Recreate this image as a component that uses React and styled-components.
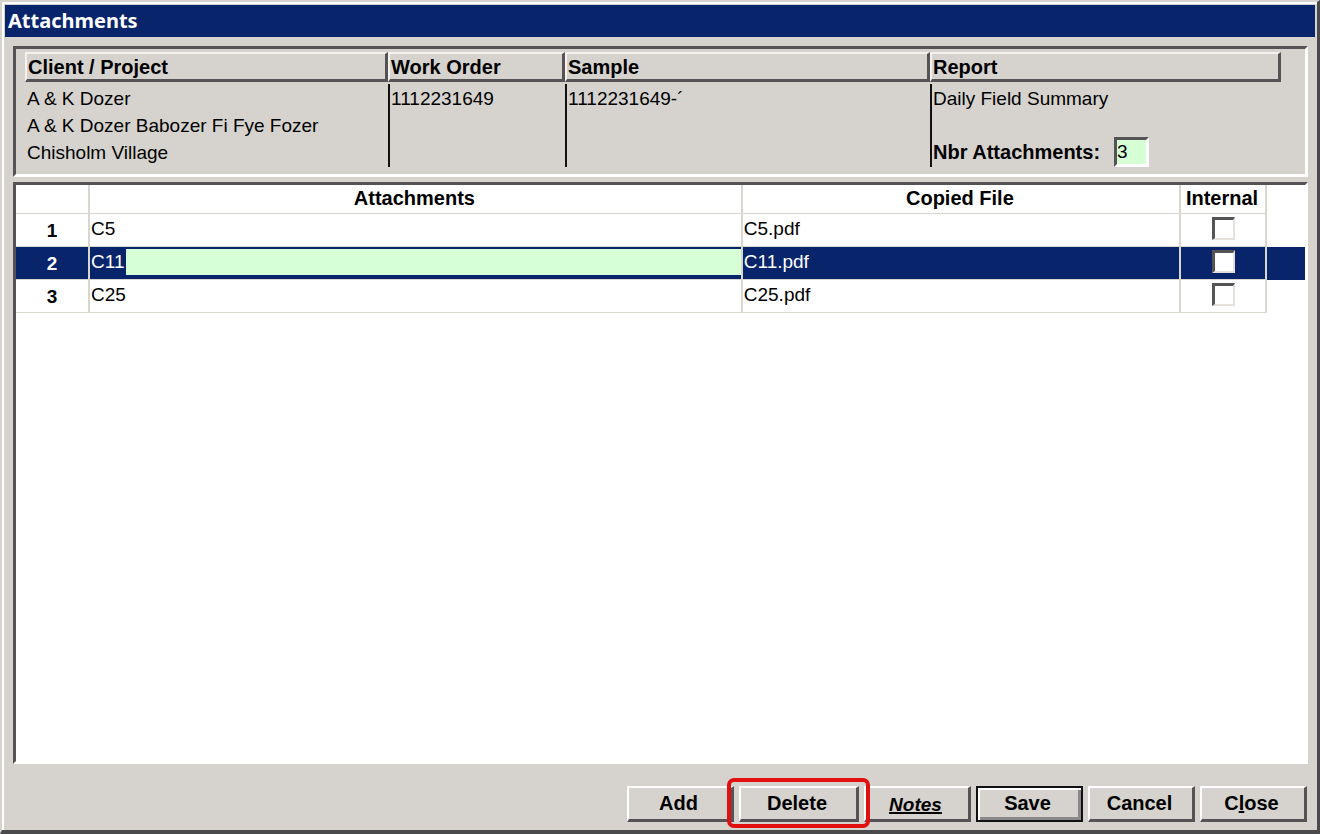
import { useState } from "react";
import styled, { createGlobalStyle } from "styled-components";

const face = "#d6d3ce";
const navy = "#08246b";
const green = "#d6ffd6";
const shadow = "#555355";
const line = "#d9d6cf";

const GlobalStyle = createGlobalStyle`
  * {
    box-sizing: border-box;
  }

  body {
    margin: 0;
    background-color: ${face};
    color: #000;
    font-family: "Liberation Sans", Arial, sans-serif;
    font-size: 19px;
    line-height: 27px;
  }

  button,
  input {
    font-family: inherit;
    margin: 0;
  }
`;

const Window = styled.main`
  display: flex;
  flex-direction: column;
  min-height: 100vh;
  padding: 3px 2px 8px 3px;
  background-color: ${face};
  border: 2px solid ${face};
  border-right: 3px solid #4a494c;
  border-bottom: 4px solid #4a494c;
  box-shadow: inset 2px 2px 0 #fff;
`;

const TitleBar = styled.h1`
  margin: 0;
  padding: 0 3px;
  height: 32px;
  line-height: 32px;
  font-family: "Noto Sans", sans-serif;
  font-size: 20px;
  font-weight: 700;
  color: #fff;
  background-color: ${navy};
`;

const Content = styled.div`
  display: flex;
  flex-direction: column;
  flex: 1;
  gap: 5px;
  padding: 9px 7px 0 8px;
`;

const Panel = styled.section`
  border: 3px solid #fff;
  border-top-color: ${shadow};
  border-left-color: ${shadow};
`;

const InfoPanel = styled(Panel)`
  display: grid;
  grid-template-columns: 363fr 177fr 365fr 351fr;
  padding: 3px 24px 7px 9px;
`;

const InfoColumn = styled.div`
  display: flex;
  flex-direction: column;
  gap: 2px;
`;

const InfoHeading = styled.h2`
  margin: 0;
  padding: 0 1px;
  height: 30px;
  line-height: 26px;
  font-size: 20px;
  font-weight: 700;
  border: 2px solid #f4f2ee;
  border-right: 3px solid ${shadow};
  border-bottom: 3px solid ${shadow};
`;

const InfoBody = styled.div`
  display: flex;
  flex-direction: column;
  height: 83px;
  padding-left: ${(props) => (props.$divided ? "1px" : "2px")};
  border-left: ${(props) => (props.$divided ? "2px solid #111" : "none")};
`;

const InfoLine = styled.span`
  white-space: nowrap;

  &:first-child {
    padding-top: 1px;
  }
`;

const CountRow = styled.div`
  display: flex;
  align-items: center;
  gap: 14px;
  margin-top: auto;
`;

const CountLabel = styled.label`
  font-size: 20px;
  font-weight: 700;
  white-space: nowrap;
`;

const CountInput = styled.input`
  width: 35px;
  height: 30px;
  padding: 0;
  font-size: 19px;
  background-color: ${green};
  border: 3px solid #fff;
  border-top-color: ${shadow};
  border-left-color: ${shadow};
  border-radius: 0;
  outline: none;
`;

const TablePanel = styled(Panel)`
  flex: 1;
  background-color: #fff;
`;

const Table = styled.table`
  width: 100%;
  table-layout: fixed;
  border-collapse: separate;
  border-spacing: 0;
`;

const Col = styled.col`
  width: ${(props) => props.$width};
`;

const HeadCell = styled.th`
  height: 29px;
  padding: 0 2px 2px 0;
  line-height: 26px;
  font-size: 20px;
  font-weight: 700;
  border-right: 2px solid ${line};
  border-bottom: 1px solid ${line};
`;

const Row = styled.tr`
  color: ${(props) => (props.$selected ? "#fff" : "#000")};
  background-color: ${(props) => (props.$selected ? navy : "#fff")};
`;

const Cell = styled.td`
  height: 33px;
  padding: 0 0 3px 1px;
  line-height: 27px;
  vertical-align: middle;
  border-right: 2px solid ${line};
  border-bottom: 1px solid ${line};
`;

const NumberCell = styled.th`
  height: 33px;
  padding: 0;
  font-size: 19px;
  font-weight: 700;
  border-right: 2px solid ${line};
  border-bottom: 1px solid ${line};
`;

const CheckCell = styled(Cell)`
  padding: 0 0 4px;
`;

const EndCell = styled.td`
  padding: 0;
`;

const NameInput = styled.input`
  display: block;
  width: 100%;
  height: 26px;
  padding: 0;
  font-size: 19px;
  color: #fff;
  background: linear-gradient(to right, ${navy} 35px, ${green} 35px);
  border: 0;
  border-radius: 0;
  outline: none;
`;

const CheckBox = styled.input`
  appearance: none;
  display: block;
  margin: 0 auto;
  width: 23px;
  height: 23px;
  background-color: #fff;
  border: 2px solid #e4e1dc;
  border-top: 3px solid ${shadow};
  border-left: 3px solid ${shadow};

  &:checked {
    background-color: #000;
    background-clip: content-box;
    padding: 4px;
  }
`;

const Footer = styled.footer`
  display: flex;
  justify-content: flex-end;
  gap: 5px;
  padding: 22px 8px 0 0;
`;

const Button = styled.button`
  width: ${(props) => (props.$wide ? "120px" : "107px")};
  height: 36px;
  padding: 0 3px 1px 0;
  font-size: 20px;
  font-weight: 700;
  color: #000;
  background-color: ${face};
  border: 2px solid #fff;
  border-right: 3px solid ${shadow};
  border-bottom: 3px solid ${shadow};
  border-radius: 0;
`;

const DefaultButton = styled(Button)`
  padding: 0 4px 2px 0;
  border: 2px solid #111;
  box-shadow: inset 2px 2px 0 #fff, inset -3px -3px 0 #8a888a;
`;

const NotesButton = styled(Button)`
  padding-top: 3px;
  font-size: 19px;
  font-style: italic;
  text-decoration: underline;
  text-decoration-thickness: 2px;
  text-decoration-skip-ink: none;
`;

const Highlight = styled.div`
  position: relative;
  z-index: 1;

  &::after {
    content: "";
    position: absolute;
    inset: -8px -11px -6px -12px;
    border: 4px solid #e01010;
    border-radius: 7px;
    pointer-events: none;
  }
`;

const files = [
  { id: 1, name: "C5", copied: "C5.pdf" },
  { id: 2, name: "C11", copied: "C11.pdf" },
  { id: 3, name: "C25", copied: "C25.pdf" },
];

export default function App() {
  const [selected, setSelected] = useState(2);

  return (
    <>
      <GlobalStyle />
      <Window>
        <TitleBar>Attachments</TitleBar>
        <Content>
          <InfoPanel>
            <InfoColumn>
              <InfoHeading>Client / Project</InfoHeading>
              <InfoBody>
                <InfoLine>A &amp; K Dozer</InfoLine>
                <InfoLine>A &amp; K Dozer Babozer Fi Fye Fozer</InfoLine>
                <InfoLine>Chisholm Village</InfoLine>
              </InfoBody>
            </InfoColumn>
            <InfoColumn>
              <InfoHeading>Work Order</InfoHeading>
              <InfoBody $divided>
                <InfoLine>1112231649</InfoLine>
              </InfoBody>
            </InfoColumn>
            <InfoColumn>
              <InfoHeading>Sample</InfoHeading>
              <InfoBody $divided>
                <InfoLine>1112231649-´</InfoLine>
              </InfoBody>
            </InfoColumn>
            <InfoColumn>
              <InfoHeading>Report</InfoHeading>
              <InfoBody $divided>
                <InfoLine>Daily Field Summary</InfoLine>
                <CountRow>
                  <CountLabel htmlFor="count">Nbr Attachments:</CountLabel>
                  <CountInput id="count" value={files.length} readOnly />
                </CountRow>
              </InfoBody>
            </InfoColumn>
          </InfoPanel>

          <TablePanel>
            <Table>
              <colgroup>
                <Col $width="74px" />
                <Col $width="auto" />
                <Col $width="34%" />
                <Col $width="86px" />
                <Col $width="38px" />
              </colgroup>
              <thead>
                <tr>
                  <HeadCell />
                  <HeadCell scope="col">Attachments</HeadCell>
                  <HeadCell scope="col">Copied File</HeadCell>
                  <HeadCell scope="col">Internal</HeadCell>
                  <EndCell />
                </tr>
              </thead>
              <tbody>
                {files.map((file) => (
                  <Row
                    key={file.id}
                    $selected={file.id === selected}
                    onClick={() => setSelected(file.id)}
                  >
                    <NumberCell scope="row">{file.id}</NumberCell>
                    <Cell>
                      {file.id === selected ? (
                        <NameInput
                          aria-label="Attachment name"
                          defaultValue={file.name}
                        />
                      ) : (
                        file.name
                      )}
                    </Cell>
                    <Cell>{file.copied}</Cell>
                    <CheckCell>
                      <CheckBox
                        type="checkbox"
                        aria-label={`${file.name} internal`}
                      />
                    </CheckCell>
                    <EndCell />
                  </Row>
                ))}
              </tbody>
            </Table>
          </TablePanel>
        </Content>

        <Footer>
          <Button type="button">Add</Button>
          <Highlight>
            <Button type="button" $wide>
              Delete
            </Button>
          </Highlight>
          <NotesButton type="button">Notes</NotesButton>
          <DefaultButton type="button">Save</DefaultButton>
          <Button type="button">Cancel</Button>
          <Button type="button">
            C<u>l</u>ose
          </Button>
        </Footer>
      </Window>
    </>
  );
}
